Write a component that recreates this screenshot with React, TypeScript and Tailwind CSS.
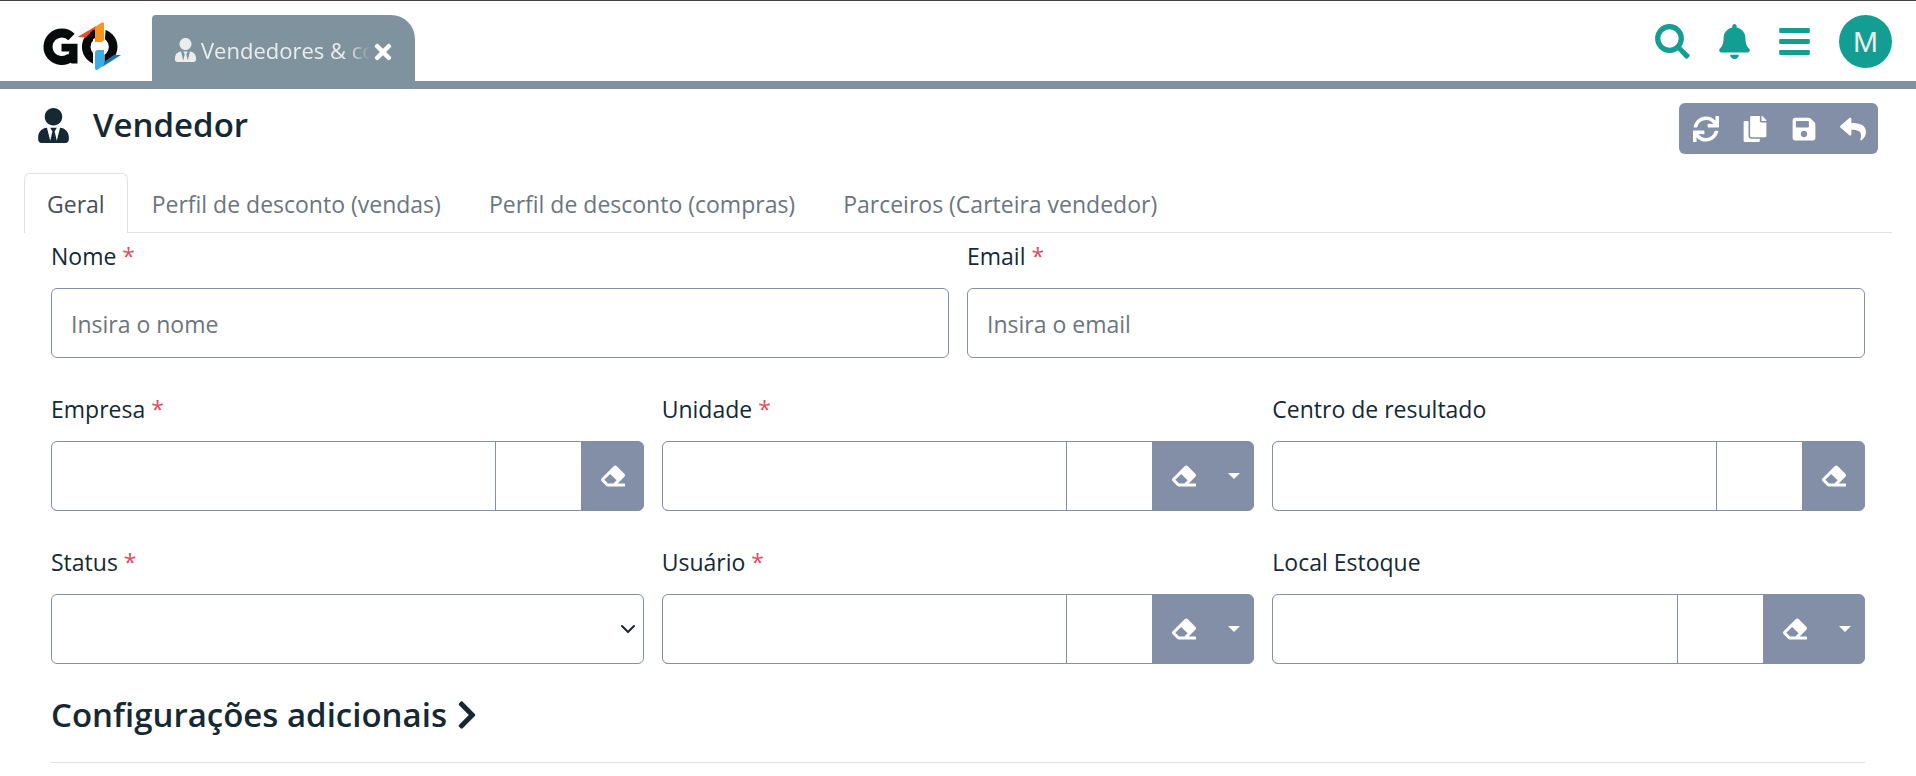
import { useId, type ReactNode } from "react";
import {
  FaBars,
  FaBell,
  FaChevronRight,
  FaCopy,
  FaEraser,
  FaReply,
  FaSave,
  FaSync,
  FaTimes,
  FaUserTie,
} from "react-icons/fa";

function Logo() {
  return (
    <svg viewBox="0 0 78 48" className="h-12 w-[78px]" role="img" aria-label="GO">
      <path
        d="M28.500 15 A13.800 13.800 0 1 0 27.500 35.500"
        fill="none"
        stroke="#060a0b"
        strokeWidth="9"
      />
      <path d="M18.500 21.700 H34.500 V41.500 H28.500 L24 36 L26.500 29.500 H18.500 Z" fill="#060a0b" />
      <ellipse cx="56.700" cy="24.800" rx="13.500" ry="13.600" fill="none" stroke="#060a0b" strokeWidth="8.600" />
      <path d="M50 4 H63 L61.500 21 H50 Z" fill="#fff" />
      <path d="M50 27 H61.500 V46 H50 Z" fill="#fff" />
      <path d="M34.500 15 L53 4 V9 Q46 10.500 43 15.500 Z" fill="#ef4a2c" />
      <path d="M47 10.500 Q50 8 52 7.500 V16 L49.500 17.500 Z" fill="#060a0b" />
      <path d="M52 5 L58 1 Q61 -1 61 2 V17 Q61 20 58 20 H52 Z" fill="#f7941e" />
      <path d="M78 33 L59 45 L61 40 L71 33 Z" fill="#1b78b0" />
      <path d="M52 31 Q52 28 55 28 H61 V43 L55 47.500 Q52 49 52 46 Z" fill="#3aade4" />
    </svg>
  );
}

function SearchIcon() {
  return (
    <svg viewBox="0 0 35 35" className="size-[35px]" aria-hidden="true">
      <circle cx="14.500" cy="14.500" r="11.800" fill="none" stroke="currentColor" strokeWidth="5.200" />
      <path d="M22.500 22.500 L26 26" stroke="currentColor" strokeWidth="4" />
      <path
        d="M26 22.800 L34.300 30.500 Q35.200 31.500 34.300 32.500 L32.500 34.400 Q31.500 35.300 30.500 34.400 L22.800 26.300 Z"
        fill="currentColor"
      />
    </svg>
  );
}

function Required() {
  return <span className="text-[#dc4c64]"> *</span>;
}

function Field({
  label,
  required,
  children,
}: {
  label: string;
  required?: boolean;
  children: (id: string) => ReactNode;
}) {
  const id = useId();
  return (
    <div className="flex min-w-0 flex-col gap-3.5">
      <label htmlFor={id} className="h-9 leading-9">
        {label}
        {required && <Required />}
      </label>
      {children(id)}
    </div>
  );
}

function TextField({ label, placeholder }: { label: string; placeholder: string }) {
  return (
    <Field label={label} required>
      {(id) => (
        <input
          id={id}
          placeholder={placeholder}
          className="h-[70px] w-full rounded-md border border-[#828fa6] px-[19px] pt-0.5 placeholder:text-[#6c757d]"
        />
      )}
    </Field>
  );
}

function LookupField({
  label,
  required,
  menu,
}: {
  label: string;
  required?: boolean;
  menu?: boolean;
}) {
  return (
    <Field label={label} required={required}>
      {(id) => (
        <div className="flex h-[70px] overflow-hidden rounded-md border border-[#828fa6] bg-[#828fa6]">
          <input id={id} className="min-w-0 flex-1 bg-white px-[19px]" />
          <input
            aria-label={`${label}: código`}
            className="w-[86px] border-l border-[#828fa6] bg-white px-3"
          />
          <button
            type="button"
            aria-label={`Limpar ${label}`}
            className="flex w-[62px] items-center justify-center pl-0.5 text-white"
          >
            <FaEraser className="size-6" />
          </button>
          {menu && (
            <button
              type="button"
              aria-label={`Opções de ${label}`}
              className="flex w-[39px] items-center justify-start pl-3.5 text-white"
            >
              <svg viewBox="0 0 12 6" className="h-1.5 w-3">
                <path d="M0 0H12L6 6Z" fill="currentColor" />
              </svg>
            </button>
          )}
        </div>
      )}
    </Field>
  );
}

function SelectField({ label }: { label: string }) {
  return (
    <Field label={label} required>
      {(id) => (
        <div className="grid">
          <select
            id={id}
            className="col-start-1 row-start-1 h-[70px] w-full appearance-none rounded-md border border-[#828fa6] bg-white px-[19px]"
          >
            <option value="" />
          </select>
          <svg
            viewBox="0 0 16 16"
            className="pointer-events-none col-start-1 row-start-1 mr-2 size-4 self-center justify-self-end"
          >
            <path
              d="m2 5 6 6 6-6"
              fill="none"
              stroke="#152935"
              strokeWidth="2"
              strokeLinecap="round"
              strokeLinejoin="round"
            />
          </svg>
        </div>
      )}
    </Field>
  );
}

const tabs = [
  "Geral",
  "Perfil de desconto (vendas)",
  "Perfil de desconto (compras)",
  "Parceiros (Carteira vendedor)",
];

const actions = [
  { label: "Atualizar", Icon: FaSync },
  { label: "Copiar", Icon: FaCopy },
  { label: "Salvar", Icon: FaSave },
  { label: "Voltar", Icon: FaReply },
];

export default function App() {
  return (
    <div className="min-h-screen bg-white font-['Segoe_UI','Open_Sans',sans-serif] text-[23px] text-[#152935]">
      <header className="flex h-[89px] items-end justify-between border-t border-b-8 border-t-[#444] border-b-[#7e939d] pr-6 pl-[43px]">
        <div className="flex items-end gap-[31px]">
          <a href="#inicio" className="pb-[11px]">
            <Logo />
          </a>
          <div className="flex h-[66px] w-[263px] items-center rounded-tl rounded-tr-3xl bg-[#7e939d] pt-1 pr-5 pl-[23px] text-[#ececec]">
            <FaUserTie className="mr-[5px] h-6 w-[21px] shrink-0" />
            <a
              href="#vendedores"
              className="min-w-0 flex-1 [mask-image:linear-gradient(to_right,black_86%,transparent)] text-[22px] whitespace-nowrap"
            >
              Vendedores &amp; co
            </a>
            <button type="button" aria-label="Fechar aba" className="shrink-0 pt-1 text-white">
              <FaTimes className="size-6" />
            </button>
          </div>
        </div>
        <div className="flex items-center gap-[29px] self-start pt-3.5 text-[#129e93]">
          <button type="button" aria-label="Pesquisar">
            <SearchIcon />
          </button>
          <button type="button" aria-label="Notificações">
            <FaBell className="h-[35px] w-[31px]" />
          </button>
          <button type="button" aria-label="Menu">
            <FaBars className="h-[35px] w-[31px]" />
          </button>
          <button
            type="button"
            aria-label="Conta"
            className="size-[53px] rounded-full bg-[#129e93] font-['Liberation_Sans',sans-serif] text-[30px] text-[#ececec]"
          >
            M
          </button>
        </div>
      </header>

      <main>
        <div className="flex items-start justify-between px-[38px] pt-3.5">
          <h1 className="flex h-[46px] items-center gap-6 pb-0.5 text-[33px] font-semibold">
            <FaUserTie className="h-[35px] w-[31px]" />
            Vendedor
          </h1>
          <div className="flex h-[51px] items-center rounded-md bg-[#828fa6] pr-px pl-0.5 text-white">
            {actions.map(({ label, Icon }) => (
              <button
                key={label}
                type="button"
                aria-label={label}
                className="flex h-full w-[49px] items-center justify-center"
              >
                <Icon className="size-[26px]" />
              </button>
            ))}
          </div>
        </div>

        <nav className="mx-6 mt-[19px] flex border-b border-[#dee2e6]">
          {tabs.map((tab, i) => (
            <a
              key={tab}
              href={`#aba-${i + 1}`}
              className={
                i === 0
                  ? "-mb-px h-[60px] rounded-t-md border border-b-0 border-[#dee2e6] bg-white px-[22px] leading-[60px] text-[#495057]"
                  : "h-[59px] border border-b-0 border-transparent px-[23px] leading-[60px] text-[#6c757d]"
              }
            >
              {tab}
            </a>
          ))}
        </nav>

        <form className="flex flex-col gap-[33px] px-[51px] pt-[5px]">
          <div className="grid grid-cols-2 gap-[18px]">
            <TextField label="Nome" placeholder="Insira o nome" />
            <TextField label="Email" placeholder="Insira o email" />
          </div>
          <div className="grid grid-cols-3 gap-x-[18px] gap-y-[33px]">
            <LookupField label="Empresa" required />
            <LookupField label="Unidade" required menu />
            <LookupField label="Centro de resultado" />
            <SelectField label="Status" />
            <LookupField label="Usuário" required menu />
            <LookupField label="Local Estoque" menu />
          </div>
        </form>

        <section className="mx-[51px] border-b border-[#dee2e6] pt-[26px] pb-[23px]">
          <h2>
            <button type="button" className="flex h-[49px] items-center gap-2.5 text-[33px] font-semibold">
              Configurações adicionais
              <FaChevronRight className="h-8 w-5" />
            </button>
          </h2>
        </section>
      </main>
    </div>
  );
}
